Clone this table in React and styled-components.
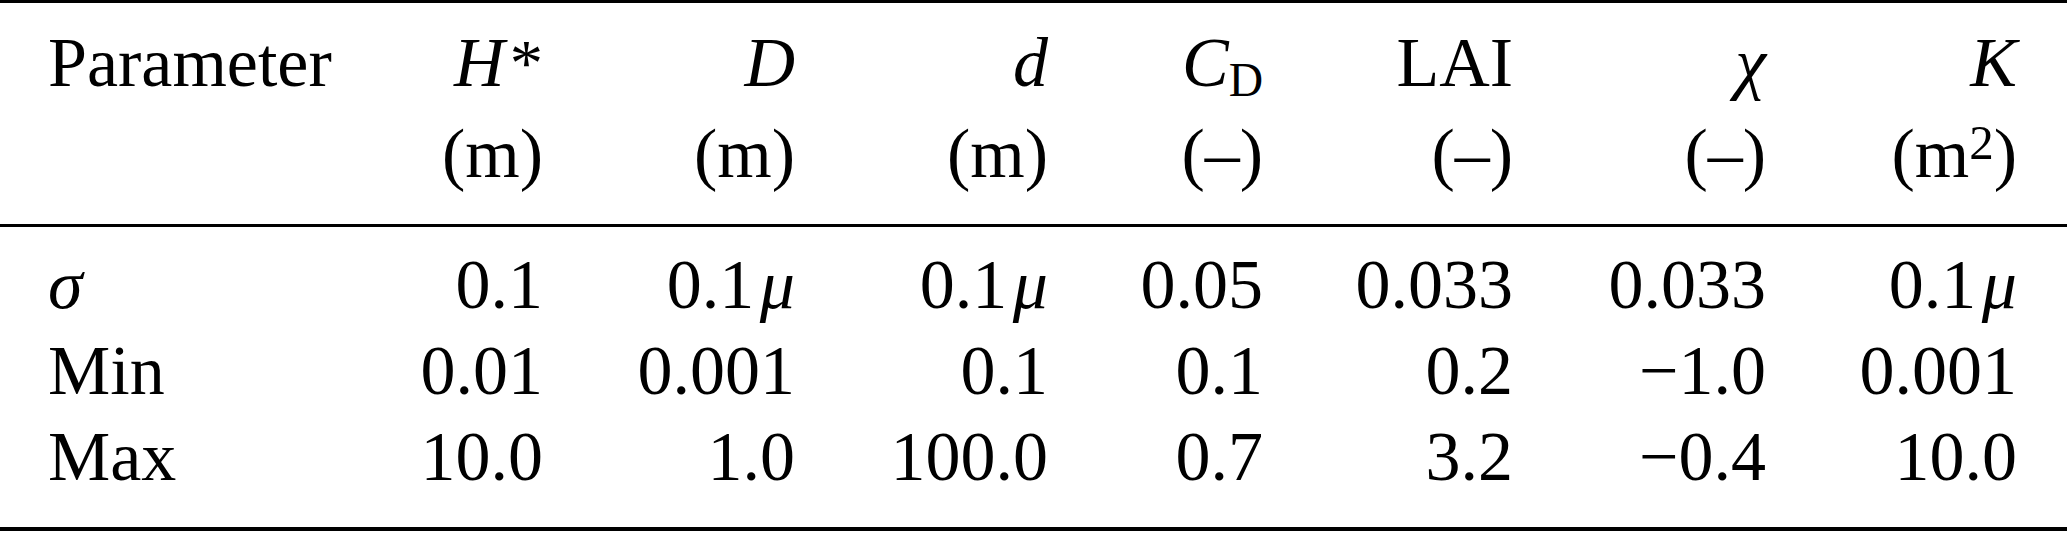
import React from 'react'
import styled, { createGlobalStyle } from 'styled-components'

const GlobalStyle = createGlobalStyle`
  html, body {
    margin: 0;
    padding: 0;
    background: #ffffff;
    overflow: hidden;
  }
  body {
    font-family: "Liberation Serif", "Times New Roman", serif;
    color: #000000;
  }
`

const Table = styled.div`
  width: 2067px;
  height: 533px;
  display: flex;
  flex-direction: column;
  background: #ffffff;
`

const Rule = styled.div`
  height: ${(p) => p.$weight || 3}px;
  background: #000000;
  flex: none;
`

const Section = styled.div`
  display: flex;
  flex-direction: column;
  padding: ${(p) => p.$pad};
`

const Row = styled.div`
  display: grid;
  grid-template-columns: 300px 195px 252px 253px 215px 250px 253px 251px;
  padding: 0 50px 0 48px;
  height: ${(p) => p.$h}px;
  line-height: ${(p) => p.$h}px;
  font-size: 70px;
  white-space: nowrap;
`

const Cell = styled.div`
  text-align: ${(p) => (p.$left ? 'left' : 'right')};
`

const Var = styled.span`
  font-style: italic;
`

const Sup = styled.sup`
  font-size: ${(p) => p.$size || '0.7em'};
  line-height: 0;
  vertical-align: ${(p) => p.$raise || '0.36em'};
  margin-left: ${(p) => p.$gap || '0'};
`

const Sub = styled.sub`
  font-size: 0.68em;
  line-height: 0;
  vertical-align: -0.2em;
`

const Mu = styled.span`
  font-style: italic;
  margin-left: 0.08em;
`

const header = [
  ['Parameter', ''],
  [<><Var>H</Var><Sup $size="0.95em" $raise="0.02em" $gap="0.08em">*</Sup></>, '(m)'],
  [<Var>D</Var>, '(m)'],
  [<Var>d</Var>, '(m)'],
  [<><Var>C</Var><Sub>D</Sub></>, '(–)'],
  ['LAI', '(–)'],
  [<Var>χ</Var>, '(–)'],
  [<Var>K</Var>, <>(m<Sup>2</Sup>)</>],
]

const mu = (v) => (
  <>
    {v}
    <Mu>μ</Mu>
  </>
)

const rows = [
  [<Var>σ</Var>, '0.1', mu('0.1'), mu('0.1'), '0.05', '0.033', '0.033', mu('0.1')],
  ['Min', '0.01', '0.001', '0.1', '0.1', '0.2', '−1.0', '0.001'],
  ['Max', '10.0', '1.0', '100.0', '0.7', '3.2', '−0.4', '10.0'],
]

export default function App() {
  return (
    <>
      <GlobalStyle />
      <Table>
        <Rule $weight={3} />
        <Section $pad="14px 0 25px">
          <Row $h={91}>
            {header.map((c, i) => (
              <Cell key={i} $left={i === 0}>{c[0]}</Cell>
            ))}
          </Row>
          <Row $h={91}>
            {header.map((c, i) => (
              <Cell key={i} $left={i === 0}>{c[1]}</Cell>
            ))}
          </Row>
        </Section>
        <Rule $weight={3} />
        <Section $pad="15px 0 27px">
          {rows.map((r, ri) => (
            <Row key={ri} $h={86}>
              {r.map((c, i) => (
                <Cell key={i} $left={i === 0}>{c}</Cell>
              ))}
            </Row>
          ))}
        </Section>
        <Rule $weight={4} />
      </Table>
    </>
  )
}
